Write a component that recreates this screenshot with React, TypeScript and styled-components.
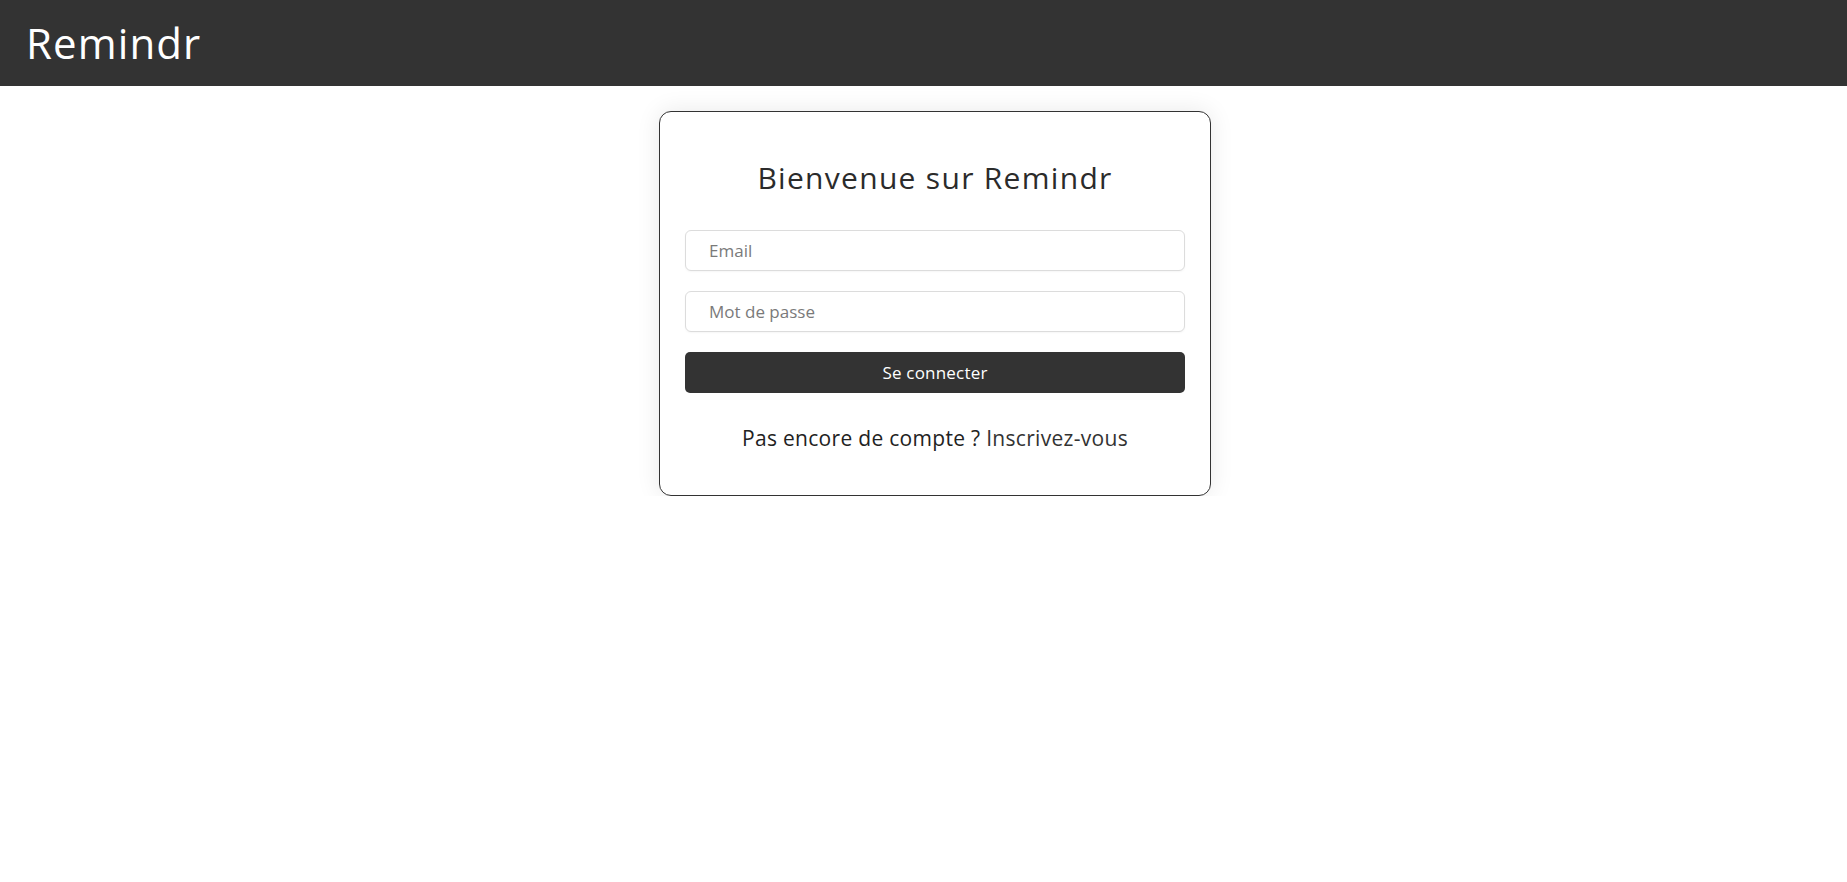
import React from "react";
import styled, { createGlobalStyle } from "styled-components";

const GlobalStyle = createGlobalStyle`
  html, body {
    margin: 0;
    padding: 0;
    background: #ffffff;
    font-family: "Open Sans", "Liberation Sans", sans-serif;
    color: #333333;
  }
  * { box-sizing: border-box; }
`;

const Header = styled.header`
  height: 86px;
  background: #333333;
  display: flex;
  align-items: center;
  padding-left: 26px;
`;

const Brand = styled.h1`
  margin: 0;
  color: #ffffff;
  font-family: "Open Sans", sans-serif;
  font-weight: 500;
  font-size: 42px;
  line-height: 1;
  letter-spacing: 1.1px;
`;

const Main = styled.main`
  display: flex;
  justify-content: center;
  padding: 25px 0 0 23px;
`;

const Card = styled.section`
  width: 552px;
  height: 385px;
  border: 1px solid #333333;
  border-radius: 12px;
  background: #ffffff;
  box-shadow: 0 0 24px rgba(0, 0, 0, 0.09);
  padding: 48px 25px 0;
  display: flex;
  flex-direction: column;
`;

const Title = styled.h2`
  margin: 0 0 34px;
  text-align: center;
  font-weight: 400;
  font-size: 30px;
  line-height: 36px;
  color: #2b2b2b;
  letter-spacing: 1.3px;
`;

const Form = styled.form`
  display: flex;
  flex-direction: column;
  gap: 20px;
`;

const Input = styled.input`
  height: 41px;
  width: 100%;
  border: 1px solid #dcdcdc;
  border-radius: 6px;
  padding: 0 23px;
  font-family: "Open Sans", sans-serif;
  font-size: 17px;
  color: #333333;
  background: #ffffff;
  outline: none;
  box-shadow: 0 1px 2px rgba(0, 0, 0, 0.04);
  &::placeholder {
    color: #7a7a7a;
  }
`;

const Button = styled.button`
  height: 41px;
  width: 100%;
  border: none;
  border-radius: 5px;
  background: #333333;
  color: #ffffff;
  font-family: "Open Sans", sans-serif;
  font-size: 17px;
  letter-spacing: 0.2px;
  cursor: pointer;
`;

const Footer = styled.p`
  margin: 31px 0 0;
  text-align: center;
  font-size: 21px;
  line-height: 28px;
  color: #222222;
  letter-spacing: 0.3px;
`;

const Link = styled.a`
  color: #333333;
  text-decoration: none;
`;

export default function App() {
  return (
    <>
      <GlobalStyle />
      <Header>
        <Brand>Remindr</Brand>
      </Header>
      <Main>
        <Card>
          <Title>Bienvenue sur Remindr</Title>
          <Form onSubmit={(e) => e.preventDefault()}>
            <Input type="email" placeholder="Email" />
            <Input type="password" placeholder="Mot de passe" />
            <Button type="submit">Se connecter</Button>
          </Form>
          <Footer>
            Pas encore de compte ? <Link href="#">Inscrivez-vous</Link>
          </Footer>
        </Card>
      </Main>
    </>
  );
}
